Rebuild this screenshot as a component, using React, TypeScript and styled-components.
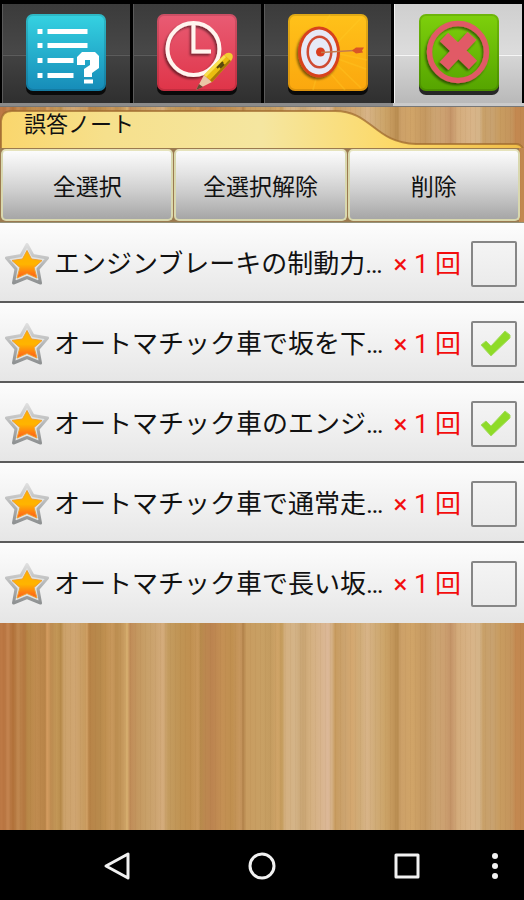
import React, { useState } from "react";
import styled, { createGlobalStyle, css } from "styled-components";

const GlobalStyle = createGlobalStyle`
  *, *::before, *::after { box-sizing: border-box; }
  html, body { margin: 0; padding: 0; background: #000; }
  body, button, input {
    font-family: Roboto, "Noto Sans CJK JP", sans-serif;
    color: #111;
  }
  button { margin: 0; padding: 0; border: 0; cursor: pointer; }
`;

const grain: [number, string][] = [
  [0, "#c07c48"], [4, "#b87440"], [8, "#c48450"], [13, "#b07038"], [18, "#c08850"],
  [24, "#b47840"], [28, "#b88848"], [36, "#c08c50"], [45, "#b88448"], [47, "#d49c60"],
  [52, "#bc8c50"], [56, "#c49858"], [61, "#b88c4c"], [64, "#cca26a"], [75, "#d0a672"],
  [84, "#c89c60"], [87, "#d0a064"], [89, "#b88448"], [100, "#b88a4c"], [105, "#c09050"],
  [112, "#c8985c"], [117, "#bc8e50"], [124, "#c89c60"], [127, "#d8b070"], [130, "#c08c58"],
  [138, "#c49860"], [146, "#c8a068"], [155, "#cca470"], [163, "#d4ac7c"], [168, "#c49c60"],
  [180, "#c09454"], [190, "#c09050"], [198, "#c8985c"], [201, "#b88a4c"], [205, "#bc8850"],
  [212, "#bc8450"], [222, "#c49054"], [232, "#c09050"], [241, "#c89860"], [243, "#b08048"],
  [246, "#c89c60"], [262, "#c8a064"], [270, "#c49c60"], [278, "#d0a468"], [282, "#c49c5c"],
  [285, "#d4b080"], [295, "#d4b488"], [303, "#c8a472"], [310, "#d4b080"], [320, "#d8b48c"],
  [328, "#dcb898"], [332, "#d4b084"], [335, "#c89c60"], [345, "#cca470"], [352, "#d4a870"],
  [360, "#d0ac78"], [367, "#d8b488"], [375, "#d0ac78"], [385, "#cca468"], [392, "#c4985c"],
  [398, "#b88c50"], [400, "#cca068"], [412, "#d0a468"], [425, "#c49860"], [435, "#cca472"],
  [445, "#cca070"], [451, "#c49468"], [458, "#d4ac7c"], [472, "#d8b488"], [480, "#d4b488"],
  [483, "#c8a068"], [492, "#c8a270"], [500, "#c89c60"], [512, "#c4945c"], [516, "#c48850"],
  [524, "#c08850"],
];
const wood = grain.map(([at, c]) => `${c} ${((at / 524) * 100).toFixed(2)}%`).join(", ");

const Screen = styled.div`
  display: flex;
  flex-direction: column;
  min-height: 100vh;
  background:
    repeating-linear-gradient(90deg, rgba(120, 70, 20, 0.05) 0 1px, transparent 1px 5px),
    linear-gradient(90deg, ${wood});
`;

const TabBar = styled.nav`
  display: grid;
  grid-template-columns: repeat(4, 1fr);
  gap: 3px;
  padding: 4px 2px 0;
  background: #000;
`;

const TabButton = styled.button<{ $active: boolean }>`
  display: flex;
  align-items: center;
  justify-content: center;
  height: 99px;
  padding-top: 2px;
  ${({ $active }) =>
    $active
      ? css`
          border-left: 1px solid #f4f4f4;
          background:
            linear-gradient(#f6f6f6, #f6f6f6) 0 51px / 100% 1px no-repeat,
            linear-gradient(#cfcfcf, #dcdcdc 50%, #d6d6d6 52%, #b9b9b9);
        `
      : css`
          border-left: 1px solid #5a5a5a;
          background:
            linear-gradient(#5c5c5c, #5c5c5c) 0 51px / 100% 1px no-repeat,
            linear-gradient(#3b3b3b, #484848 50%, #424242 52%, #2f2f2f);
        `}
`;

const TabStrip = styled.div`
  height: 4px;
  background: linear-gradient(90deg, #8b8b8b 75%, #cacaca 75%);
  border-bottom: 1px solid #777;
`;

const AppIcon = styled.svg`
  display: block;
  width: 82px;
  height: 84px;
`;

const TitleBar = styled.header`
  position: relative;
  height: 41px;
  padding-left: 24px;
`;

const FolderShape = styled.svg`
  position: absolute;
  inset: 0;
  width: 100%;
  height: 100%;
`;

const Title = styled.h1`
  position: relative;
  margin: 0;
  font-size: 22px;
  line-height: 36px;
  font-weight: 400;
`;

const Actions = styled.div`
  display: grid;
  grid-template-columns: repeat(3, 1fr);
  gap: 1px;
  padding: 1px 4px 1px 1px;
  height: 75px;
  border-bottom: 1px solid #96937a;
  background: linear-gradient(90deg, #9b7a50 99%, transparent 99%);
`;

const ActionButton = styled.button`
  padding-top: 6px;
  border: 2px solid #d9d8ae;
  border-top-color: #e6e3bc;
  border-radius: 5px;
  background: linear-gradient(#fcfcfc, #e2e2e2 35%, #cdcdcd 60%, #a6a6a6);
  font-size: 23px;
  line-height: 32px;
`;

const List = styled.ul`
  margin: 0;
  padding: 0;
  list-style: none;
`;

const Row = styled.li`
  display: flex;
  align-items: center;
  height: 80px;
  padding: 3px 7px 0 5px;
  border-bottom: 2px solid #5c5c5c;
  background: linear-gradient(#fdfdfd, #e6e6e6);

  &:last-child {
    border-bottom-color: #e6e6e6;
  }
`;

const Star = styled.svg`
  flex: none;
  width: 44px;
  height: 44px;
`;

const Question = styled.label`
  flex: 1;
  min-width: 0;
  margin-left: 5px;
  overflow: hidden;
  font-size: 26px;
  line-height: 40px;
  white-space: nowrap;
`;

const Count = styled.span`
  flex: none;
  margin: 0 10px 0 8px;
  color: #f30d0d;
  font-size: 26px;
  line-height: 40px;
`;

const TickBox = styled.span`
  display: grid;
  flex: none;
  width: 46px;
  height: 46px;

  > * {
    grid-area: 1 / 1;
  }
`;

const TickInput = styled.input`
  appearance: none;
  width: 46px;
  height: 46px;
  margin: 0;
  border: 2px solid #868686;
  border-radius: 2px;
  background: linear-gradient(#f4f4f4, #ebebeb);
  cursor: pointer;
`;

const TickMark = styled.svg`
  width: 46px;
  height: 46px;
  pointer-events: none;
`;

const SystemBar = styled.footer`
  display: grid;
  grid-template-columns: 44px repeat(3, 1fr) 44px;
  height: 70px;
  padding-top: 1px;
  margin-top: auto;
  background: #000;
`;

const SystemButton = styled.button<{ $first?: boolean; $edge?: boolean }>`
  display: flex;
  align-items: center;
  justify-content: ${({ $edge }) => ($edge ? "flex-start" : "center")};
  grid-column: ${({ $first }) => ($first ? "2" : "auto")};
  background: transparent;
`;

const Glyph = styled.svg`
  width: 30px;
  height: 30px;
  fill: none;
  stroke: #f2f2f2;
  stroke-width: 3;
  stroke-linejoin: round;
`;

function IconTile({ id, from, to, children }: { id: string; from: string; to: string; children: React.ReactNode }) {
  return (
    <AppIcon viewBox="-1 -1 82 84" aria-hidden="true">
      <defs>
        <linearGradient id={id} x1="0" y1="0" x2="0" y2="1">
          <stop offset="0" stopColor={from} />
          <stop offset="1" stopColor={to} />
        </linearGradient>
        <filter id={`${id}-shade`} x="-20%" y="-20%" width="140%" height="140%">
          <feDropShadow dx="-1.5" dy="2" stdDeviation="1.2" floodColor="#000" floodOpacity="0.5" />
        </filter>
      </defs>
      <rect x="0" y="3" width="80" height="78" rx="7" fill="#000" opacity="0.8" />
      <rect x="0" y="0" width="80" height="77" rx="7" fill={`url(#${id})`} />
      <rect x="1" y="1" width="78" height="75" rx="6" fill="none" stroke="#000" strokeOpacity="0.12" strokeWidth="2" />
      {children}
    </AppIcon>
  );
}

const ListIcon = () => (
  <IconTile id="tile-list" from="#35d3e2" to="#168bb8">
    <g fill="#fff">
      <path d="M11.5 15h5v5h-5zM21.5 15h40v5h-40zM11.5 29h5v5h-5zM21.5 29h40v5h-40zM11.5 44h5v5h-5zM21.5 44h26v5h-26zM11.5 59h5v5h-5zM21.5 59h26v5h-26z" />
      <path d="M51 51V43l5-5h13l4 4v12l-7 5v4h-8v-8l6-4v-5h-5v5zM58 65.500h9v4h-9z" />
    </g>
  </IconTile>
);

const ClockIcon = () => (
  <IconTile id="tile-clock" from="#e95c74" to="#df3448">
    <g filter="url(#tile-clock-shade)" fill="none" stroke="#fff5ef">
      <circle cx="36.500" cy="35" r="26" strokeWidth="4" />
      <path d="M36.500 11v26.500H54" strokeWidth="4" />
    </g>
    <path d="M39 76l8-15 8 7z" fill="#eac7a5" />
    <path d="M39 76l3-6 4 3z" fill="#6b4934" />
    <path d="M47 61L67 41l7 6-19 21z" fill="#eabd10" />
    <path d="M47 61L67 41l2 2-20 20z" fill="#f9e04e" />
    <path d="M53 66l20-21 1 2-19 21z" fill="#a87808" />
    <path d="M67 41q4-4 8-1 2 3-1 7z" fill="#f2cd30" />
    <path d="M60 54l6-6M63 54l4-4" stroke="#57450c" strokeWidth="2" />
  </IconTile>
);

const TargetIcon = () => (
  <IconTile id="tile-target" from="#ffc21a" to="#fba70e">
    <g stroke="#ffcf2a" strokeWidth="1.500" opacity="0.3">
      <path d="M50 45l28 10M48 50l25 24M43 60l14 16M50 28L74 3M36 10L42 1M28 65l-3 11M52 40l27 6" />
    </g>
    <g filter="url(#tile-target-shade)">
      <ellipse cx="31" cy="38" rx="21" ry="25.500" fill="#d8431c" />
    </g>
    <ellipse cx="31" cy="38" rx="18" ry="22.500" fill="#e6e9f7" />
    <ellipse cx="31.500" cy="38" rx="13" ry="16.500" fill="#cf4a32" />
    <ellipse cx="31.500" cy="38" rx="10.500" ry="14" fill="#e6e9f7" />
    <circle cx="32.500" cy="38" r="4.500" fill="#d93c1e" />
    <path d="M33 38.500L66 36.500" stroke="#c47b4c" strokeWidth="1.500" />
    <path d="M64 36.500l4-3h8l-2 3 1 2-7 1z" fill="#d95526" />
  </IconTile>
);

const CrossIcon = () => (
  <IconTile id="tile-cross" from="#7ed00c" to="#55a400">
    <g filter="url(#tile-cross-shade)" fill="none" stroke="#e15a66">
      <circle cx="39" cy="38" r="28.500" strokeWidth="5.500" />
      <path d="M25 23l29 28M53 22L25 52" strokeWidth="12" />
    </g>
  </IconTile>
);

const tabs = [
  { label: "問題一覧", icon: ListIcon },
  { label: "模擬試験", icon: ClockIcon },
  { label: "苦手克服", icon: TargetIcon },
  { label: "誤答ノート", icon: CrossIcon },
];

const StarIcon = () => (
  <Star viewBox="0 0 44 44" aria-hidden="true">
    <defs>
      <linearGradient id="star-fill" x1="0" y1="0" x2="0" y2="1">
        <stop offset="0" stopColor="#ffb000" />
        <stop offset="0.5" stopColor="#ffb400" />
        <stop offset="1" stopColor="#ff5a1c" />
      </linearGradient>
      <linearGradient id="star-rim" x1="0" y1="0" x2="0" y2="1">
        <stop offset="0" stopColor="#dedede" />
        <stop offset="1" stopColor="#8e9192" />
      </linearGradient>
    </defs>
    <path
      d="M22 2.500L28 13.500 42.500 16 33 27 35.500 41 22 35.500 8.500 41 11 27 1.500 16 16 13.500Z"
      fill="#e0e2e2" stroke="url(#star-rim)" strokeWidth="3" strokeLinejoin="round"
    />
    <path
      d="M22 8.500L26.500 17 37 18.500 29 25.500 32 36 22 31.500 12 36 15 25.500 7 18.500 17.500 17Z"
      fill="url(#star-fill)" stroke="#f0a030" strokeWidth="1"
    />
  </Star>
);

const questions = [
  "エンジンブレーキの制動力…",
  "オートマチック車で坂を下…",
  "オートマチック車のエンジ…",
  "オートマチック車で通常走…",
  "オートマチック車で長い坂…",
];

export default function App() {
  const [activeTab, setActiveTab] = useState(3);
  const [checked, setChecked] = useState([false, true, true, false, false]);

  const toggle = (index: number) => setChecked(checked.map((value, i) => (i === index ? !value : value)));

  return (
    <Screen>
      <GlobalStyle />
      <TabBar>
        {tabs.map(({ label, icon: Icon }, i) => (
          <TabButton key={label} type="button" aria-label={label} $active={i === activeTab} onClick={() => setActiveTab(i)}>
            <Icon />
          </TabButton>
        ))}
      </TabBar>
      <TabStrip />
      <TitleBar>
        <FolderShape viewBox="0 0 524 41" preserveAspectRatio="none" aria-hidden="true">
          <defs>
            <linearGradient id="folder" x1="0" y1="0" x2="1" y2="0">
              <stop offset="0" stopColor="#fad66c" />
              <stop offset="0.2" stopColor="#f6e08c" />
              <stop offset="0.5" stopColor="#f5e6a0" />
              <stop offset="0.75" stopColor="#fcd968" />
              <stop offset="1" stopColor="#f0bd48" />
            </linearGradient>
          </defs>
          <path
            d="M1 42V14Q2 4 12 4H335C372 4 374 36 416 37H516Q521 37 523 42Z"
            fill="url(#folder)" stroke="#a06c30" strokeOpacity="0.75" strokeWidth="2"
          />
        </FolderShape>
        <Title>誤答ノート</Title>
      </TitleBar>
      <Actions>
        <ActionButton type="button" onClick={() => setChecked(checked.map(() => true))}>全選択</ActionButton>
        <ActionButton type="button" onClick={() => setChecked(checked.map(() => false))}>全選択解除</ActionButton>
        <ActionButton type="button">削除</ActionButton>
      </Actions>
      <List>
        {questions.map((text, i) => (
          <Row key={text}>
            <StarIcon />
            <Question htmlFor={`question-${i}`}>{text}</Question>
            <Count>× 1 回</Count>
            <TickBox>
              <TickInput id={`question-${i}`} type="checkbox" checked={checked[i]} onChange={() => toggle(i)} />
              {checked[i] && (
                <TickMark viewBox="0 0 46 46" aria-hidden="true">
                  <path d="M10 24l5-4 5 5L34 10l5 4v3L20 35z" fill="#8edb28" stroke="#a5dc62" strokeWidth="1" strokeLinejoin="round" />
                </TickMark>
              )}
            </TickBox>
          </Row>
        ))}
      </List>
      <SystemBar>
        <SystemButton type="button" aria-label="戻る" $first>
          <Glyph viewBox="0 0 30 30"><path d="M4 15L26 3v24z" /></Glyph>
        </SystemButton>
        <SystemButton type="button" aria-label="ホーム">
          <Glyph viewBox="0 0 30 30"><circle cx="15" cy="15" r="12" /></Glyph>
        </SystemButton>
        <SystemButton type="button" aria-label="最近使ったアプリ">
          <Glyph viewBox="0 0 30 30"><rect x="4" y="4" width="22" height="22" /></Glyph>
        </SystemButton>
        <SystemButton type="button" aria-label="メニュー" $edge>
          <Glyph viewBox="0 0 30 30">
            <g fill="#f2f2f2" stroke="none">
              <circle cx="15" cy="5" r="3" /><circle cx="15" cy="15" r="3" /><circle cx="15" cy="25" r="3" />
            </g>
          </Glyph>
        </SystemButton>
      </SystemBar>
    </Screen>
  );
}
